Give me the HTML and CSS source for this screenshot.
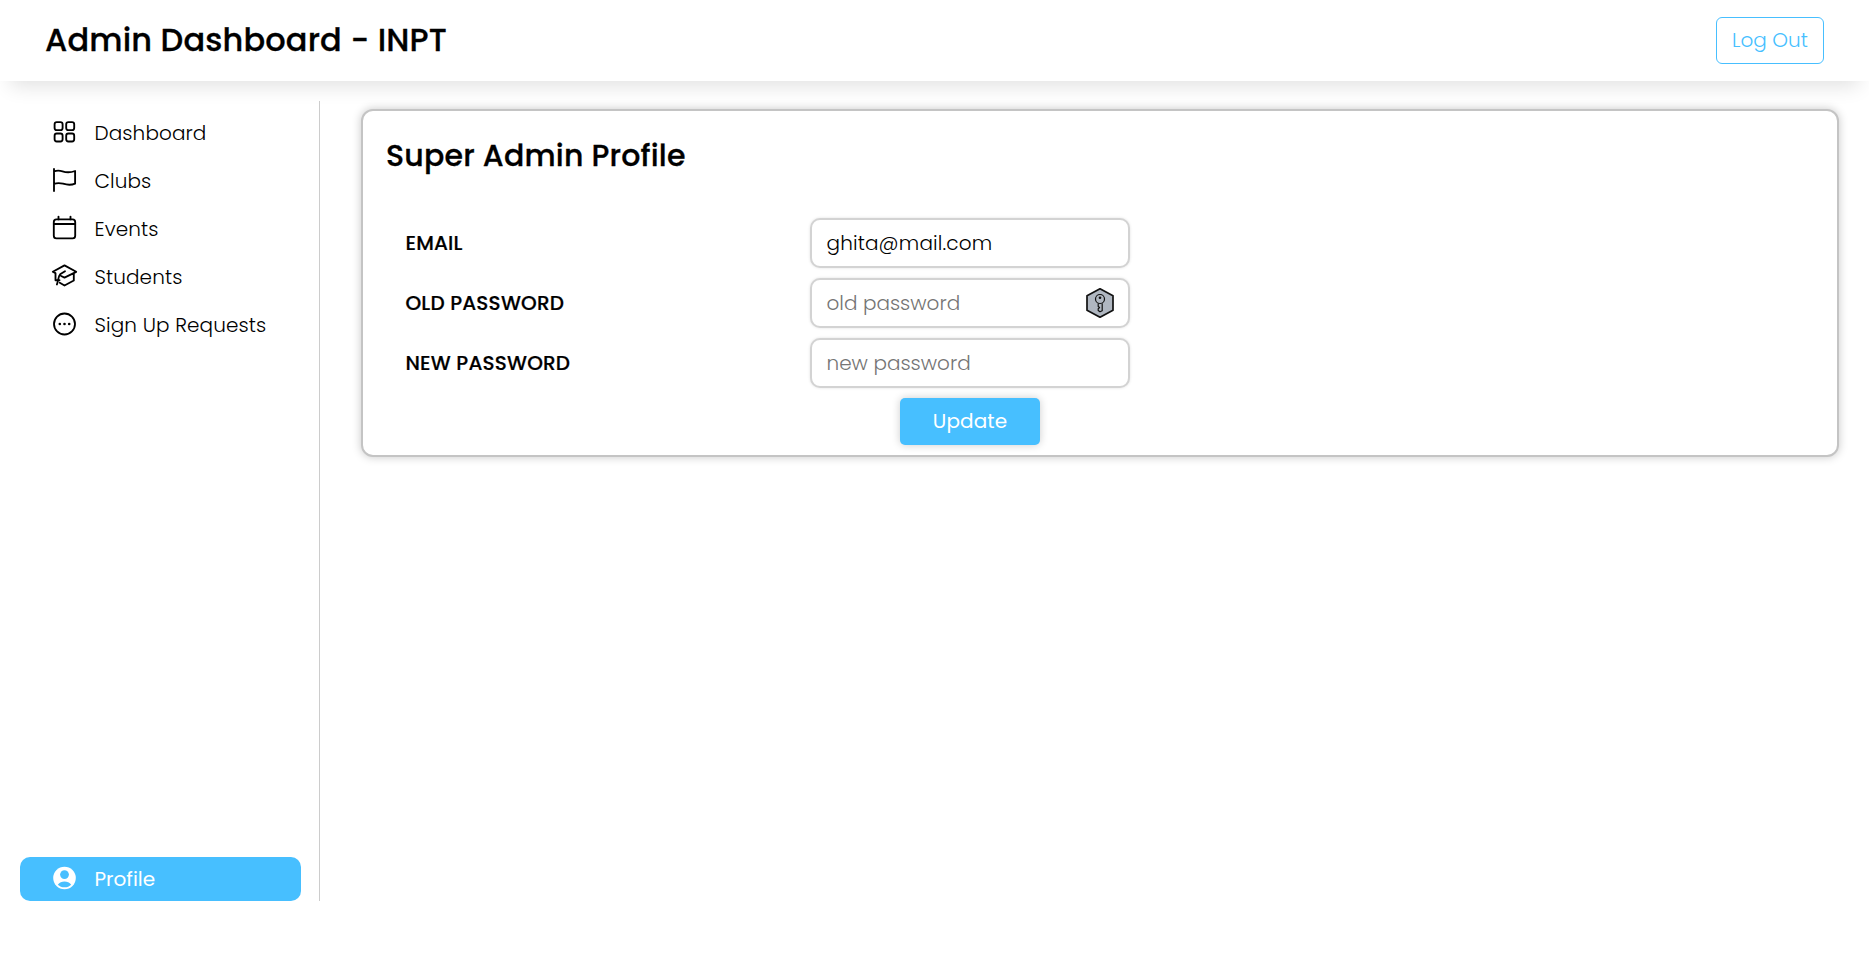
FILE: index.html
```html
<!DOCTYPE html>
<html lang="en">
<head>
<meta charset="utf-8">
<title>Admin Dashboard - INPT</title>
<link rel="stylesheet" href="styles.css">
</head>
<body>
<header class="topbar">
  <h1 class="brand">Admin Dashboard - INPT</h1>
  <button class="logout">Log Out</button>
</header>
<div class="layout">
  <nav class="sidebar">
    <a class="item"><svg class="icon" viewBox="0.5 0 28 28"><rect x="4.1" y="4.1" width="8" height="8" rx="2.2"/><rect x="15.700" y="4.1" width="8" height="8" rx="2.2"/><rect x="4.1" y="15.5" width="8" height="8" rx="2.2"/><rect x="15.700" y="15.5" width="8" height="8" rx="2.2"/></svg><span>Dashboard</span></a>
    <a class="item"><svg class="icon" viewBox="0.5 0 28 28"><path d="M3.5 3v22M3.5 5.3C6 4.4 9 4.3 12 5.3C16 6.7 19 7 24.6 5v12.7C20 19.6 16.500 19 12.500 17.700C9 16.700 6 17 3.5 17.800"/></svg><span>Clubs</span></a>
    <a class="item"><svg class="icon" viewBox="0.5 0 28 28"><rect x="3.3" y="5.400" width="21.400" height="19" rx="2.600"/><path d="M3.3 10h21.400M8 2.600v2.800M20 2.600v2.800"/></svg><span>Events</span></a>
    <a class="item"><svg class="icon" viewBox="0.5 0 28 28"><path d="M14 3.400L2.300 9.800L5 11.200M14 3.400L25.700 9.800L14 15.600L10.600 14M14.500 9.300L9.600 12.300C7.800 14 8 18 6.400 22.500M5 11.200V18.200H9M9.300 20.800L14 23.500L23.300 18.500V11.500"/></svg><span>Students</span></a>
    <a class="item"><svg class="icon" viewBox="0.5 0 28 28"><circle cx="14" cy="14" r="10.500"/><g class="solid"><circle cx="9.300" cy="14" r="1.300"/><circle cx="14" cy="14" r="1.300"/><circle cx="18.700" cy="14" r="1.300"/></g></svg><span>Sign Up Requests</span></a>
    <a class="item active"><svg class="icon" viewBox="0.5 0 28 28"><circle class="disc" cx="14" cy="14" r="11.300"/><circle class="cut" cx="14" cy="10.600" r="4.400"/><path class="cut" d="M7.300 20.700C9 18.400 11.300 17.500 14 17.500S19 18.400 20.700 20.700C18.900 22.400 16.700 23.300 14 23.300S9.100 22.400 7.300 20.700Z"/></svg><span>Profile</span></a>
  </nav>
  <main class="content">
    <section class="card">
      <h2 class="heading">Super Admin Profile</h2>
      <form class="form">
        <label class="label">EMAIL</label>
        <div class="field"><span class="value">ghita@mail.com</span></div>
        <label class="label">OLD PASSWORD</label>
        <div class="field placeholder"><span>old password</span>
          <svg class="key" viewBox="0 0 30 32"><path class="hex" d="M15 1.800L28 8.700V23.300L15 30.200L2 23.300V8.700Z"/><circle cx="15" cy="12" r="4.500"/><circle class="dot" cx="15" cy="10.800" r="1.300"/><path d="M13.200 16.200V19.500L14.600 20.500L13.200 21.700V23.500L15 24.800L17.200 23.700V16.200"/></svg>
        </div>
        <label class="label">NEW PASSWORD</label>
        <div class="field placeholder"><span>new password</span></div>
        <button class="update" type="button">Update</button>
      </form>
    </section>
  </main>
</div>
</body>
</html>
```
FILE: styles.css
```css
* { box-sizing: border-box; }
body {
  margin: 0;
  height: 953px;
  overflow: hidden;
  background: #fff;
  color: #000;
  font: 300 20px/30px Poppins, Inter, "Open Sans", sans-serif;
}
h1, h2 { margin: 0; font-weight: 500; }
button { font: inherit; padding: 0 0 2px; }
span, label, h1, h2 { white-space: nowrap; }
.topbar {
  height: 81px;
  padding: 0 45px 0 45px;
  display: flex;
  align-items: center;
  justify-content: space-between;
  box-shadow: 0 15px 20px -10px rgba(0, 0, 0, .12);
}
.brand { font-size: 32px; line-height: 48px; padding-bottom: 2px; letter-spacing: .14px; -webkit-text-stroke: .3px #000; }
.logout {
  width: 108px;
  height: 47px;
  border: 1px solid #47bfff;
  border-radius: 6px;
  background: #fff;
  color: #47bfff;
}
.layout { display: flex; padding-top: 20px; }
.sidebar {
  width: 320px;
  height: 800px;
  padding: 10px 18px 0 20px;
  display: flex;
  flex-direction: column;
  gap: 4px;
  border-right: 1px solid #ccc;
}
.item {
  height: 44px;
  padding-left: 31px;
  display: flex;
  align-items: center;
  gap: 15.500px;
  border-radius: 10px;
  letter-spacing: .1px;
}
.item.active { margin-top: auto; background: #47bfff; color: #fff; font-weight: 400; letter-spacing: 0; }
.icon {
  width: 28px;
  height: 28px;
  flex: none;
  margin-bottom: 3px;
  fill: none;
  stroke: #000;
  stroke-width: 1.850;
  stroke-linecap: round;
  stroke-linejoin: round;
}
.solid { fill: #000; stroke: none; }
.disc { fill: #fff; stroke: none; }
.cut { fill: #47bfff; stroke: none; }
.content { flex: 1; padding: 8px 30px 0 41px; }
.card {
  height: 348px;
  padding: 22px 23px 0;
  border: 2px solid #c4c4c4;
  border-radius: 12px;
  background: #fff;
  box-shadow: 0 0 10px rgba(0, 0, 0, .22);
}
.heading { font-size: 30px; line-height: 46px; letter-spacing: .18px; -webkit-text-stroke: .3px #000; }
.form {
  margin-top: 39px;
  padding-left: 19px;
  display: grid;
  grid-template-columns: 405px 320px;
  row-gap: 10px;
  align-items: center;
}
.label { font-weight: 500; padding-left: .5px; letter-spacing: .18px; -webkit-text-stroke: .2px #000; }
.field {
  height: 50px;
  padding: 0 13px 0 14.500px;
  display: flex;
  align-items: center;
  justify-content: space-between;
  border: 2px solid #d3d3d3;
  border-radius: 10px;
  background: #fff;
  box-shadow: 0 0 3px rgba(0, 0, 0, .12);
}
.value { letter-spacing: .15px; }
.placeholder { color: #757575; }
.key { width: 30px; height: 32px; fill: none; stroke: #111; stroke-width: 1.200; stroke-linejoin: round; }
.hex { fill: #b0b7c1; stroke-width: 1.700; }
.dot { fill: #111; stroke: none; }
.update {
  grid-column: 2;
  justify-self: center;
  width: 140px;
  height: 47px;
  border: 0;
  border-radius: 5px;
  background: #47bfff;
  color: #fff;
  font-weight: 400;
  letter-spacing: .1px;
  box-shadow: 0 0 8px rgba(0, 0, 0, .2);
}
```
